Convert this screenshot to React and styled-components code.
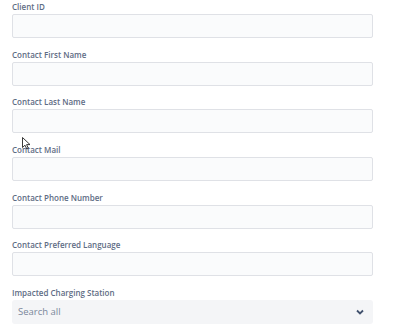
import React from "react";
import styled, { createGlobalStyle } from "styled-components";

const GlobalStyle = createGlobalStyle`
  html, body {
    margin: 0;
    padding: 0;
    background: #ffffff;
    font-family: "Open Sans", "Noto Sans", sans-serif;
  }
`;

const Page = styled.div`
  position: relative;
  width: 408px;
  height: 332px;
  overflow: hidden;
  padding: 0 35px 0 12px;
  box-sizing: border-box;
`;

const Form = styled.div`
  display: flex;
  flex-direction: column;
  gap: 9.67px;
`;

const Field = styled.div`
  display: flex;
  flex-direction: column;
`;

const Label = styled.label`
  font-size: 8px;
  line-height: 14px;
  font-weight: 600;
  color: #5e6c84;
`;

const Input = styled.input`
  height: 24px;
  box-sizing: border-box;
  border: 1.5px solid #dfe1e6;
  border-radius: 2px;
  background: #fafbfc;
  padding: 0 6px;
  font-family: inherit;
  font-size: 9.5px;
  outline: none;
`;

const Select = styled.div`
  height: 24px;
  box-sizing: border-box;
  border-radius: 3px;
  background: #f4f5f7;
  display: flex;
  align-items: center;
  justify-content: space-between;
  padding: 0 9px 0 6px;
  font-size: 9.5px;
  color: #7a869a;
`;

const Cursor = styled.svg`
  position: absolute;
  left: 22px;
  top: 137px;
`;

const fields = [
  "Client ID",
  "Contact First Name",
  "Contact Last Name",
  "Contact Mail",
  "Contact Phone Number",
  "Contact Preferred Language",
];

export default function App() {
  return (
    <Page>
      <GlobalStyle />
      <Form>
        {fields.map((name) => (
          <Field key={name}>
            <Label>{name}</Label>
            <Input />
          </Field>
        ))}
        <Field>
          <Label>Impacted Charging Station</Label>
          <Select>
            <span>Search all</span>
            <svg width="8" height="6" viewBox="0 0 8 6">
              <path d="M1 1.5 L4 4.5 L7 1.5" fill="none" stroke="#42526e" strokeWidth="1.8" />
            </svg>
          </Select>
        </Field>
      </Form>
      <Cursor width="9" height="13" viewBox="0 0 9 13">
        <path d="M0.5 0.5 L0.5 10.5 L3 8.2 L4.8 12 L6.3 11.3 L4.6 7.6 L8 7.6 Z" fill="#fff" stroke="#222" strokeWidth="0.9" strokeLinejoin="round" />
      </Cursor>
    </Page>
  );
}
